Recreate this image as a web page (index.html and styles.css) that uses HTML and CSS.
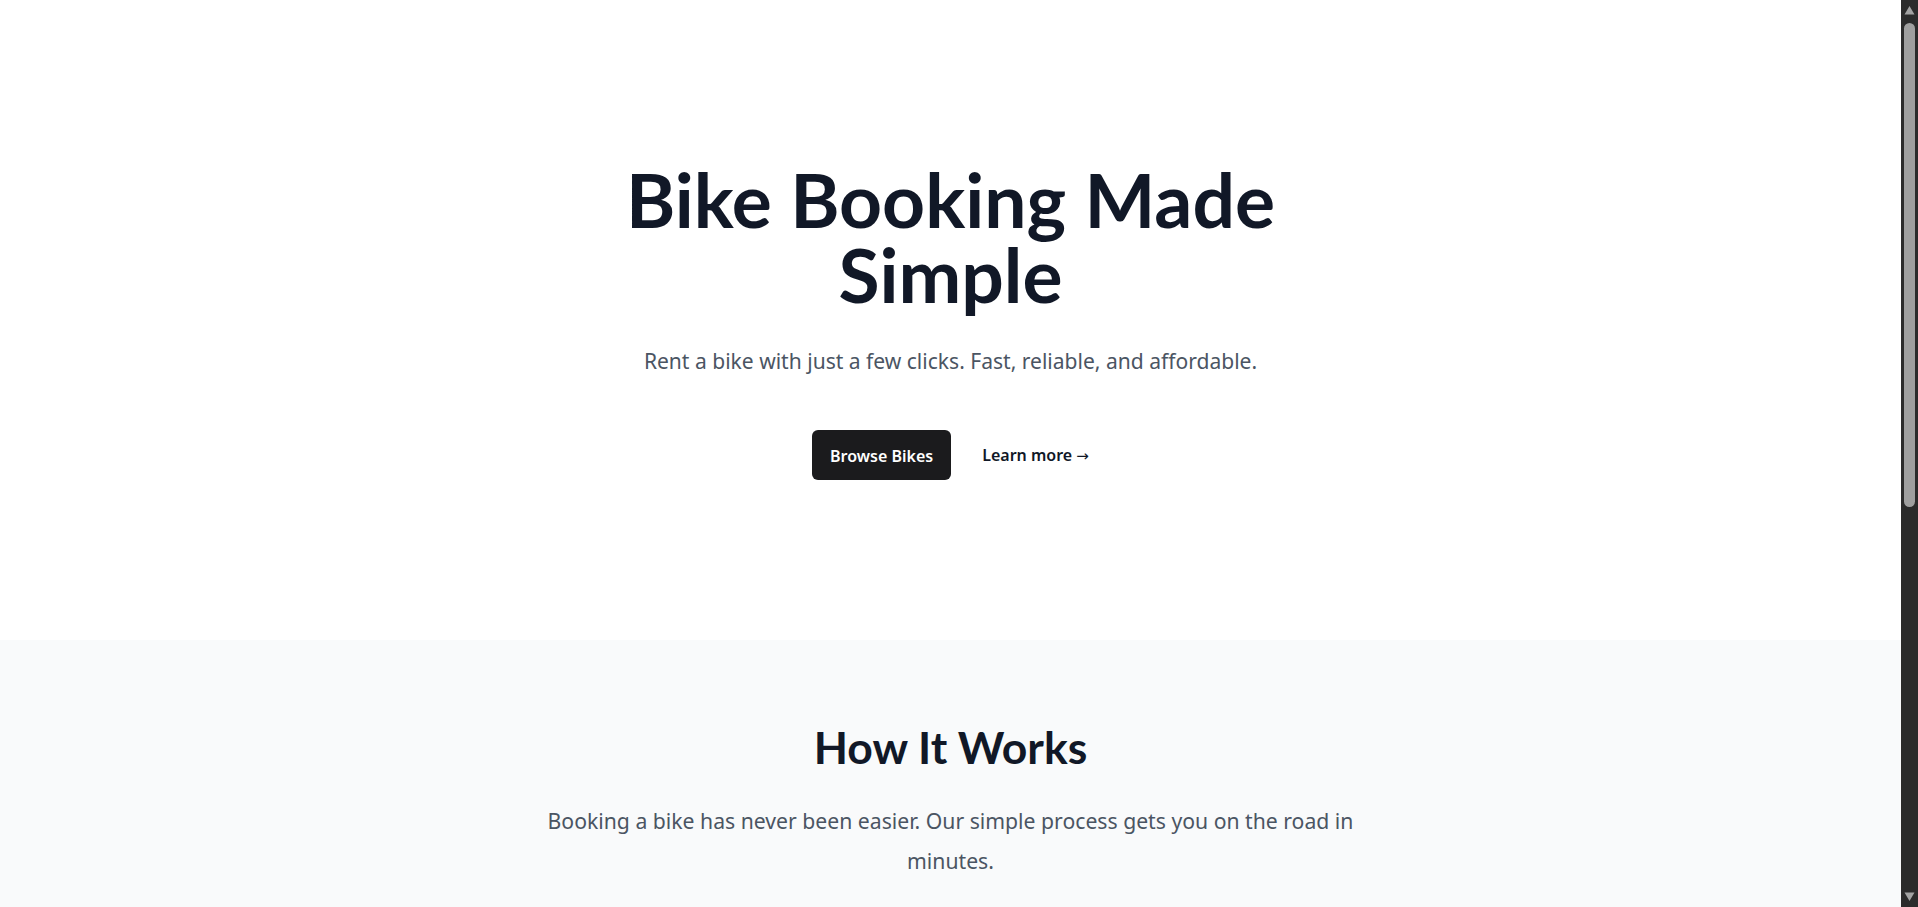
FILE: index.html
```html
<!DOCTYPE html>
<html lang="en">
<head>
<meta charset="utf-8">
<title>Bike Booking Made Simple</title>
<link rel="stylesheet" href="styles.css">
</head>
<body class="page">
<main class="content">
  <section class="hero">
    <div class="hero-inner">
      <h1 class="hero-title">Bike Booking Made Simple</h1>
      <p class="hero-sub">Rent a bike with just a few clicks. Fast, reliable, and affordable.</p>
      <div class="hero-actions">
        <a class="btn-primary" href="#bikes">Browse Bikes</a>
        <a class="btn-link" href="#how">Learn more <span class="arrow" aria-hidden="true">→</span></a>
      </div>
    </div>
  </section>

  <section class="how" id="how">
    <div class="how-inner">
      <h2 class="section-title">How It Works</h2>
      <p class="section-sub">Booking a bike has never been easier. Our simple process gets you on the road in minutes.</p>
    </div>
  </section>
</main>

<div class="scrollbar" aria-hidden="true">
  <div class="sb-btn">
    <svg width="17" height="17" viewBox="0 0 17 17"><polygon points="3.5,14.5 8.5,6 13.5,14.5" fill="#a3a3a3"/></svg>
  </div>
  <div class="sb-track">
    <div class="sb-thumb"></div>
  </div>
  <div class="sb-btn">
    <svg width="17" height="17" viewBox="0 0 17 17"><polygon points="3.5,2.5 8.5,11 13.5,2.5" fill="#a3a3a3"/></svg>
  </div>
</div>
</body>
</html>
```

FILE: styles.css
```css
html {
  background: #ffffff;
}

.page {
  margin: 0;
  height: 100vh;
  overflow: hidden;
  display: flex;
  background: #ffffff;
  color: #111827;
  font-family: "Noto Sans", "Open Sans", sans-serif;
}

a {
  text-decoration: none;
}

.content {
  flex: 1;
  min-width: 0;
  display: flex;
  flex-direction: column;
}

/* Hero */
.hero {
  background: #ffffff;
  padding: 162px 24px 160px;
}

.hero-inner {
  max-width: 768px;
  margin: 0 auto;
  text-align: center;
}

.hero-title {
  margin: 0;
  font-family: "Lato", "Noto Sans", sans-serif;
  font-weight: 700;
  font-size: 75px;
  line-height: 75px;
  color: #111827;
}

.hero-sub {
  margin: 35px 0 0;
  font-size: 21.05px;
  line-height: 28px;
  color: #4b5563;
}

.hero-actions {
  margin-top: 55px;
  display: flex;
  justify-content: center;
  align-items: center;
  gap: 31px;
}

.btn-primary {
  display: inline-block;
  background: #1b1b1d;
  color: #ffffff;
  font-size: 16px;
  font-weight: 600;
  line-height: 24px;
  padding: 14px 18px 12px;
  border-radius: 6px;
}

.btn-link {
  color: #111827;
  font-size: 16px;
  font-weight: 600;
  line-height: 24px;
}

.arrow {
  font-family: "DejaVu Sans", sans-serif;
  font-weight: 400;
  font-size: 15px;
}

/* How it works */
.how {
  flex: 1;
  background: #f9fafb;
  padding: 80px 24px 0;
}

.how-inner {
  max-width: 1100px;
  margin: 0 auto;
  text-align: center;
}

.section-title {
  margin: 0;
  font-family: "Lato", "Noto Sans", sans-serif;
  font-weight: 700;
  font-size: 44.5px;
  line-height: 53px;
  color: #111827;
}

.section-sub {
  max-width: 840px;
  margin: 28px auto 0;
  font-size: 21.2px;
  line-height: 40px;
  color: #4b5563;
}

/* Window scrollbar as seen in the screenshot */
.scrollbar {
  width: 17px;
  flex: none;
  display: flex;
  flex-direction: column;
  background: #2b2b2b;
}

.sb-btn {
  height: 17px;
  flex: none;
}

.sb-btn svg {
  display: block;
}

.sb-track {
  flex: 1;
}

.sb-thumb {
  margin: 6px 3px 0;
  height: 484px;
  border-radius: 6px;
  background: #9f9f9f;
}
```
